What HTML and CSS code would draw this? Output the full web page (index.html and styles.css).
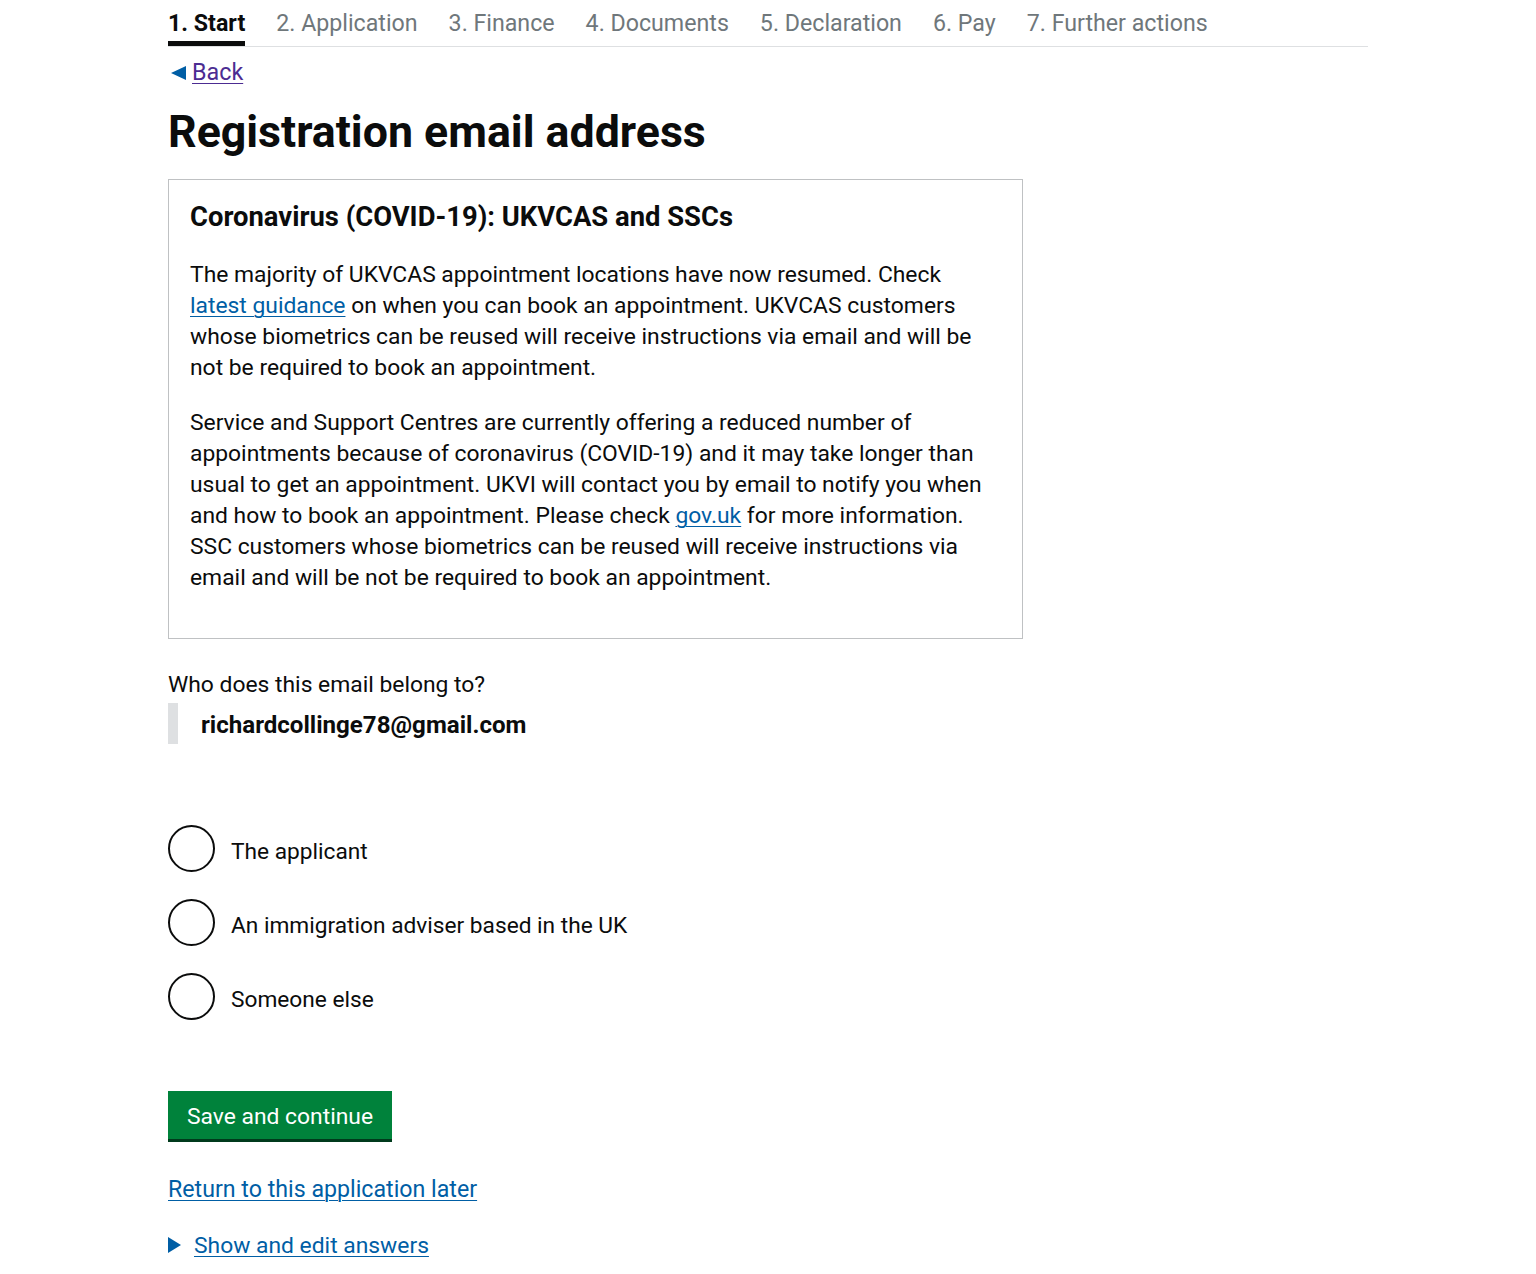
FILE: index.html
```html
<!DOCTYPE html>
<html lang="en">
<head>
<meta charset="utf-8">
<title>Registration email address</title>
<link rel="stylesheet" href="styles.css">
</head>
<body>
<div class="page">
  <nav class="steps">
    <ol class="steps-list">
      <li class="step step-active">1. Start</li>
      <li class="step">2. Application</li>
      <li class="step">3. Finance</li>
      <li class="step">4. Documents</li>
      <li class="step">5. Declaration</li>
      <li class="step">6. Pay</li>
      <li class="step">7. Further actions</li>
    </ol>
  </nav>

  <a class="back-link" href="#">Back</a>

  <h1 class="heading-l">Registration email address</h1>

  <div class="inset">
    <h2 class="heading-m">Coronavirus (COVID-19): UKVCAS and SSCs</h2>
    <p class="body">The majority of UKVCAS appointment locations have now resumed. Check<br>
      <a class="link" href="#">latest guidance</a> on when you can book an appointment. UKVCAS customers<br>
      whose biometrics can be reused will receive instructions via email and will be<br>
      not be required to book an appointment.</p>
    <p class="body">Service and Support Centres are currently offering a reduced number of<br>
      appointments because of coronavirus (COVID-19) and it may take longer than<br>
      usual to get an appointment. UKVI will contact you by email to notify you when<br>
      and how to book an appointment. Please check <a class="link" href="#">gov.uk</a> for more information.<br>
      SSC customers whose biometrics can be reused will receive instructions via<br>
      email and will be not be required to book an appointment.</p>
  </div>

  <p class="question">Who does this email belong to?</p>
  <div class="email">richardcollinge78@gmail.com</div>

  <div class="radios">
    <label class="radio"><input class="radio-input" type="radio" name="owner"><span class="radio-circle"></span><span class="radio-label">The applicant</span></label>
    <label class="radio"><input class="radio-input" type="radio" name="owner"><span class="radio-circle"></span><span class="radio-label">An immigration adviser based in the UK</span></label>
    <label class="radio"><input class="radio-input" type="radio" name="owner"><span class="radio-circle"></span><span class="radio-label">Someone else</span></label>
  </div>

  <button class="button" type="button">Save and continue</button>

  <p class="later"><a class="link" href="#">Return to this application later</a></p>

  <div class="details"><span class="details-arrow"></span><a class="link" href="#">Show and edit answers</a></div>
</div>
</body>
</html>
```
FILE: styles.css
```css
html, body {
  margin: 0;
  padding: 0;
  background: #ffffff;
}

body {
  font-family: Roboto, "Liberation Sans", Arial, sans-serif;
  color: #0b0c0c;
  font-size: 22.85px;
  line-height: 31px;
}

.page {
  width: 1200px;
  margin: 0 auto;
}

/* Steps nav */
.steps-list {
  list-style: none;
  margin: 0;
  padding: 0;
  display: flex;
  gap: 31px;
  border-bottom: 1px solid #dee0e2;
}

.step {
  padding: 8px 0 2px;
  border-bottom: 5px solid transparent;
  color: #6f777b;
  font-size: 23.2px;
  line-height: 31px;
}

.step-active {
  color: #0b0c0c;
  font-weight: 700;
  border-bottom-color: #0b0c0c;
}

/* Back link */
.back-link {
  display: inline-flex;
  align-items: center;
  gap: 6px;
  margin-top: 10px;
  margin-left: 3px;
  color: #4c2c92;
  font-size: 23.3px;
  text-decoration: underline;
  text-underline-offset: 3px;
  text-decoration-thickness: 1px;
}

.back-link::before {
  content: "";
  display: block;
  width: 0;
  height: 0;
  border-top: 7.5px solid transparent;
  border-bottom: 7.5px solid transparent;
  border-right: 15px solid #005ea5;
  margin-top: 1px;
}

.heading-l {
  margin: 19px 0 0;
  font-size: 44.7px;
  line-height: 50px;
  font-weight: 700;
}

/* Inset box */
.inset {
  box-sizing: border-box;
  width: 855px;
  margin-top: 22px;
  padding: 20px 21px 21px 21px;
  border: 1px solid #bfc1c3;
}

.heading-m {
  margin: 0 0 24px;
  font-size: 27.4px;
  line-height: 35px;
  font-weight: 700;
}

.body {
  margin: 0 0 24px;
}

.link {
  color: #005ea5;
  text-decoration: underline;
  text-underline-offset: 3px;
  text-decoration-thickness: 1px;
}

/* Question */
.question {
  margin: 30px 0 0;
}

.email {
  margin-top: 3px;
  border-left: 10px solid #dee0e2;
  padding: 6px 0 2px 23px;
  font-weight: 700;
  font-size: 24.1px;
  line-height: 33px;
}

/* Radios */
.radios {
  margin-top: 81px;
  display: flex;
  flex-direction: column;
  gap: 27px;
}

.radio {
  display: flex;
  align-items: center;
  gap: 16px;
  cursor: pointer;
}

.radio-input {
  position: absolute;
  opacity: 0;
  width: 0;
  height: 0;
  margin: 0;
}

.radio-circle {
  box-sizing: border-box;
  flex: none;
  width: 47px;
  height: 47px;
  border: 2.5px solid #0b0c0c;
  border-radius: 50%;
  background: #ffffff;
}

.radio-input:checked + .radio-circle {
  box-shadow: inset 0 0 0 9px #ffffff;
  background: #0b0c0c;
}

.radio-label {
  padding-top: 6px;
  font-size: 22.7px;
}

/* Button */
.button {
  display: block;
  margin-top: 71px;
  padding: 10px 19px 7px 19px;
  border: 0;
  border-radius: 0;
  background: #00823b;
  color: #ffffff;
  font-family: inherit;
  font-size: 22.85px;
  line-height: 31px;
  box-shadow: 0 3px 0 #003a1c;
  cursor: pointer;
}

.later {
  margin: 35px 0 0;
  font-size: 23.2px;
}

.details {
  margin-top: 25px;
  display: flex;
  align-items: center;
  gap: 13px;
  font-size: 22.85px;
}

.details-arrow {
  display: block;
  width: 0;
  height: 0;
  border-top: 8px solid transparent;
  border-bottom: 8px solid transparent;
  border-left: 13px solid #005ea5;
  margin-top: -2px;
}
```
